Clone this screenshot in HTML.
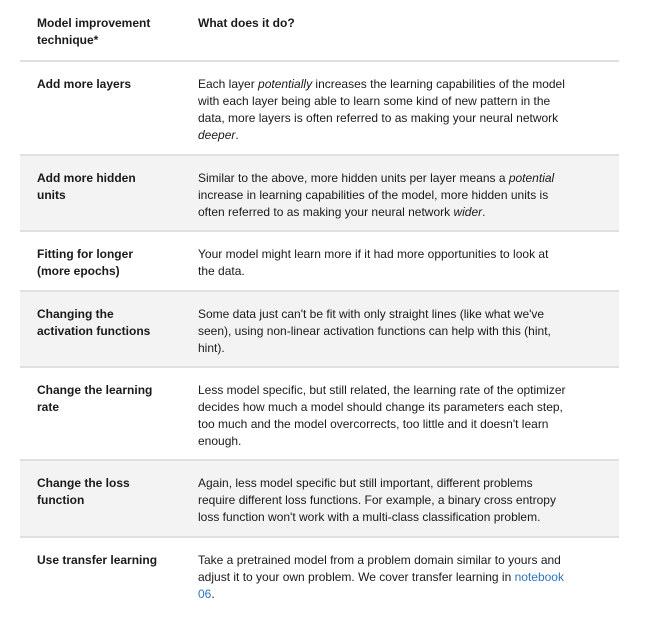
<!DOCTYPE html>
<html><head><style>
body{margin:0;width:666px;height:629px;background:#fff;font-family:"Liberation Sans",sans-serif;font-size:12px;color:#1a1a1a;position:relative;overflow:hidden}
.r{position:absolute;left:20px;width:599px;border-top:2px solid #e0e0e0;box-sizing:border-box}
.g{background:#f3f3f3}
.c1,.c2{position:absolute;top:14px;line-height:17px;white-space:nowrap}
.c1{left:17px;font-weight:bold}
.c2{left:178px}
a{color:#2f74c0;text-decoration:none}
</style></head><body>
<div class="r" style="top:0;height:61px;border-top:none"><div class="c1" style="top:15px">Model improvement<br>technique*</div><div class="c2" style="top:15px;font-weight:bold">What does it do?</div></div>
<div class="r" style="top:60px;height:95px"><div class="c1">Add more layers</div><div class="c2">Each layer <i>potentially</i> increases the learning capabilities of the model<br>with each layer being able to learn some kind of new pattern in the<br>data, more layers is often referred to as making your neural network<br><i>deeper</i>.</div></div>
<div class="r g" style="top:154px;height:77px"><div class="c1">Add more hidden<br>units</div><div class="c2">Similar to the above, more hidden units per layer means a <i>potential</i><br>increase in learning capabilities of the model, more hidden units is<br>often referred to as making your neural network <i>wider</i>.</div></div>
<div class="r" style="top:230px;height:61px"><div class="c1">Fitting for longer<br>(more epochs)</div><div class="c2">Your model might learn more if it had more opportunities to look at<br>the data.</div></div>
<div class="r g" style="top:290px;height:77px"><div class="c1">Changing the<br>activation functions</div><div class="c2">Some data just can't be fit with only straight lines (like what we've<br>seen), using non-linear activation functions can help with this (hint,<br>hint).</div></div>
<div class="r" style="top:366px;height:94px"><div class="c1">Change the learning<br>rate</div><div class="c2">Less model specific, but still related, the learning rate of the optimizer<br>decides how much a model should change its parameters each step,<br>too much and the model overcorrects, too little and it doesn't learn<br>enough.</div></div>
<div class="r g" style="top:459px;height:78px"><div class="c1">Change the loss<br>function</div><div class="c2">Again, less model specific but still important, different problems<br>require different loss functions. For example, a binary cross entropy<br>loss function won't work with a multi-class classification problem.</div></div>
<div class="r" style="top:536px;height:80px"><div class="c1">Use transfer learning</div><div class="c2">Take a pretrained model from a problem domain similar to yours and<br>adjust it to your own problem. We cover transfer learning in <a>notebook</a><br><a>06</a>.</div></div>
</body></html>
